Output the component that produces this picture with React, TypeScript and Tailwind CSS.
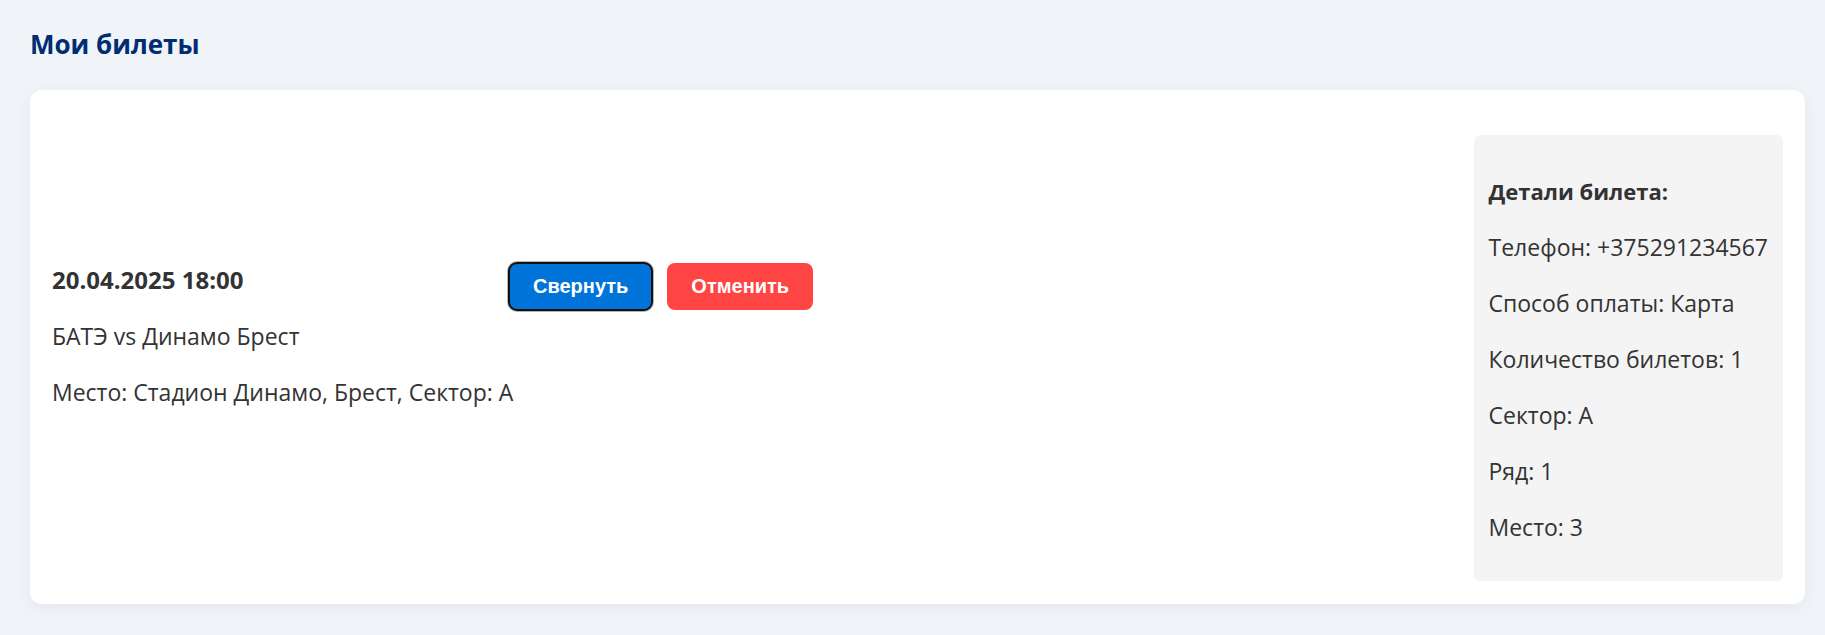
const details = [
  "Телефон: +375291234567",
  "Способ оплаты: Карта",
  "Количество билетов: 1",
  "Сектор: A",
  "Ряд: 1",
  "Место: 3",
];

export default function App() {
  return (
    <main className="min-h-screen bg-[#f0f3f8] pt-[23px] pr-5 pb-[30px] pl-[30px] font-['Open_Sans','Noto_Sans',sans-serif] text-[#333333]">
      <h1 className="mb-[25px] text-[26px] leading-[42px] font-bold text-[#002d72]">Мои билеты</h1>
      <article className="flex items-center justify-between rounded-xl bg-white px-[22px] pt-[45px] pb-[23px] text-[23px] leading-8 shadow-[0_4px_16px_rgba(0,0,0,0.05)]">
        <div className="flex items-start pb-[45px]">
          <div className="flex w-[457px] flex-col gap-6 pt-px whitespace-nowrap">
            <h2 className="text-2xl leading-8 font-bold">20.04.2025 18:00</h2>
            <p>БАТЭ vs Динамо Брест</p>
            <p>Место: Стадион Динамо, Брест, Сектор: A</p>
          </div>
          <div className="flex gap-[15px] font-['Liberation_Sans',sans-serif] text-xl font-bold text-white">
            <button type="button" className="h-[47px] rounded-lg bg-[#0074d9] px-6 pb-0.5 shadow-[0_0_0_2px_#b4b4b4] outline-2 -outline-offset-1 outline-[#101010]">Свернуть</button>
            <button type="button" className="h-[47px] rounded-lg bg-[#ff4444] px-6 pb-0.5">Отменить</button>
          </div>
        </div>
        <section className="flex flex-col gap-6 rounded-md bg-[#f4f4f4] px-[15px] pt-10 pb-[38px]">
          <h3 className="text-[22px] leading-8 font-bold">Детали билета:</h3>
          {details.map((line) => (
            <p key={line}>{line}</p>
          ))}
        </section>
      </article>
    </main>
  );
}
